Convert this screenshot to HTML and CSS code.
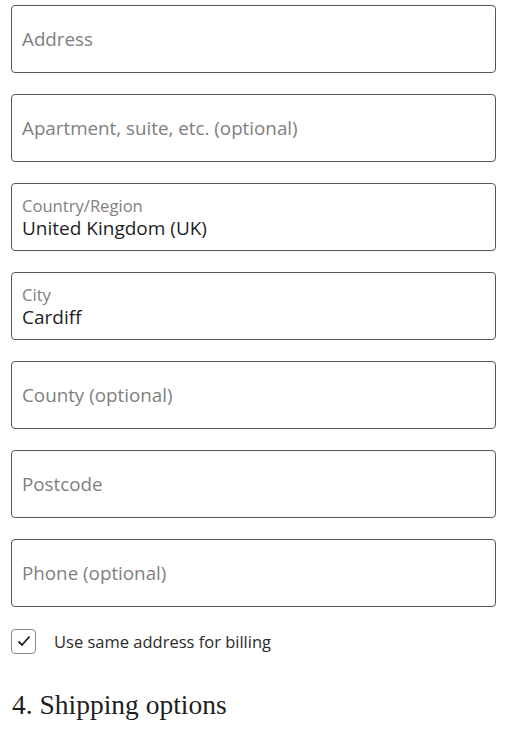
FILE: index.html
```html
<!DOCTYPE html>
<html lang="en">
<head>
<meta charset="utf-8">
<title>Shipping address</title>
<link rel="stylesheet" href="styles.css">
</head>
<body>
<main class="form">
  <div class="field"><span class="placeholder">Address</span></div>
  <div class="field"><span class="placeholder">Apartment, suite, etc. (optional)</span></div>
  <div class="field filled"><span class="label">Country/Region</span><span class="value">United Kingdom (UK)</span></div>
  <div class="field filled"><span class="label">City</span><span class="value">Cardiff</span></div>
  <div class="field"><span class="placeholder">County (optional)</span></div>
  <div class="field"><span class="placeholder">Postcode</span></div>
  <div class="field"><span class="placeholder">Phone (optional)</span></div>
  <label class="check">
    <span class="box"><svg width="16" height="16" viewBox="0 0 16 16"><path d="M2.5 8.5 L6 12 L13.5 3.5" fill="none" stroke="#1e1e1e" stroke-width="1.8"/></svg></span>
    <span class="check-text">Use same address for billing</span>
  </label>
  <h2 class="heading">4. Shipping options</h2>
</main>
</body>
</html>
```
FILE: styles.css
```css
html, body { margin: 0; padding: 0; background: #fff; }
body { font-family: "Open Sans", "Noto Sans", sans-serif; color: #1e1e1e; }
.form { padding: 5px 12px 0 11px; display: flex; flex-direction: column; }
.field {
  height: 68px;
  box-sizing: border-box;
  border: 1px solid #50575e;
  border-radius: 4px;
  margin-bottom: 21px;
  padding: 0 10px;
  display: flex;
  flex-direction: column;
  justify-content: center;
}
.placeholder { font-size: 18.8px; color: #808080; line-height: 26px; }
.filled { padding-top: 1px; }
.label { font-size: 16.6px; color: #808080; line-height: 21px; }
.value { font-size: 19px; color: #1e1e1e; line-height: 25px; }
.check { display: flex; align-items: center; margin-top: 0; height: 26px; }
.box {
  width: 25px; height: 25px; box-sizing: border-box;
  border: 1px solid #8a8a8a; border-radius: 4px;
  display: flex; align-items: center; justify-content: center;
  margin-right: 18px;
}
.check-text { font-size: 16.5px; color: #2b2b2b; }
.heading {
  font-family: "Liberation Serif", "DejaVu Serif", serif;
  font-weight: normal; font-size: 27.5px; margin: 35px 0 0 1px; color: #1e1e1e;
}
```
